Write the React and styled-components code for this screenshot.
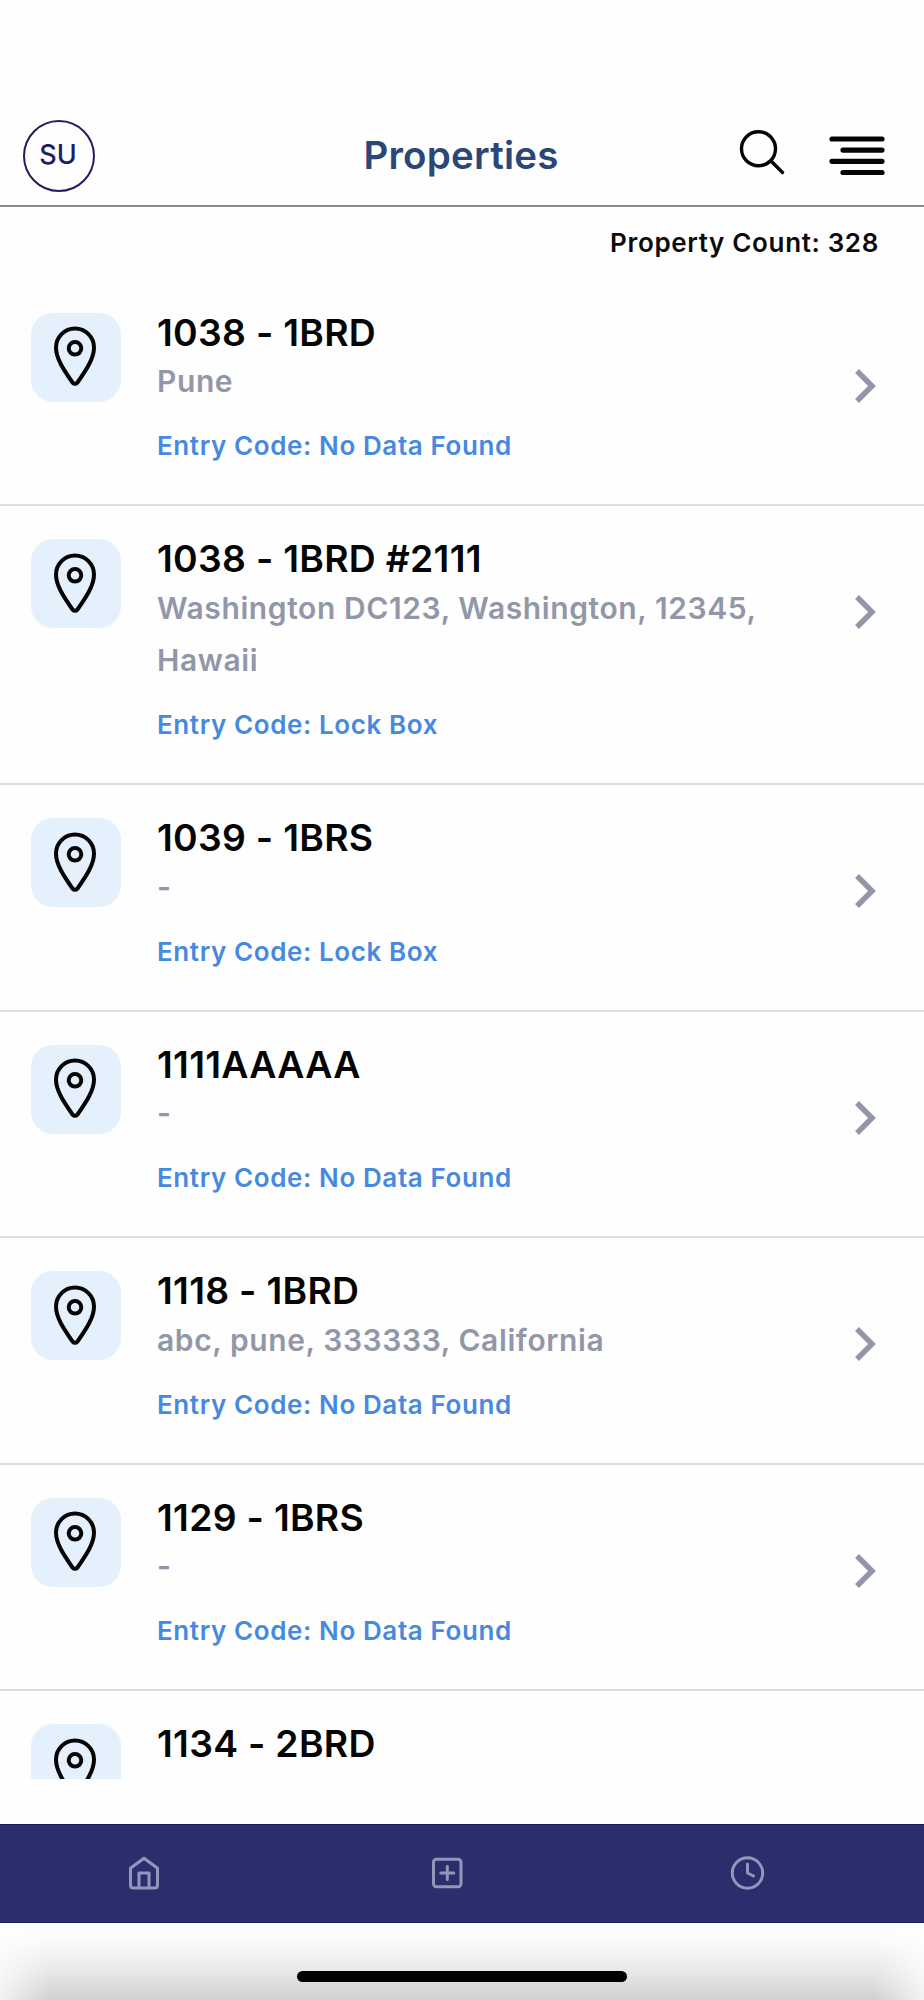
import React from "react";
import styled, { createGlobalStyle } from "styled-components";

const Global = createGlobalStyle`
  * { box-sizing: border-box; }
  body { margin: 0; background: #fff; font-family: Inter, "Liberation Sans", sans-serif; }
`;

const Screen = styled.div`
  width: 924px;
  height: 2000px;
  display: flex;
  flex-direction: column;
  background: #fefefe;
  overflow: hidden;
`;

const Header = styled.header`
  height: 207px;
  flex: none;
  padding: 106px 22.5px 0;
  border-bottom: 2px solid #8b8c8e;
  display: grid;
  grid-template-columns: 1fr auto 1fr;
  align-items: center;
`;

const Avatar = styled.div`
  width: 72px;
  height: 72px;
  border: 2px solid #211d63;
  border-radius: 50%;
  display: flex;
  align-items: center;
  justify-content: center;
  padding: 0 1px 3px 0;
  font-size: 27px;
  font-weight: 500;
  color: #211d63;
`;

const Title = styled.h1`
  margin: 0 2px 1px 0;
  font-size: 38.5px;
  line-height: 44px;
  font-weight: 600;
  color: #2b4778;
  letter-spacing: 0.2px;
`;

const Actions = styled.div`
  display: flex;
  justify-content: flex-end;
  align-items: center;
  gap: 44px;
  padding-right: 16.5px;

  svg:first-child { margin-bottom: 8px; }
`;

const Count = styled.p`
  margin: 0;
  height: 72.7px;
  flex: none;
  padding: 20px 45px 0 0;
  text-align: right;
  font-size: 26px;
  line-height: 32px;
  font-weight: 600;
  letter-spacing: 0.65px;
  color: #0b0b0b;
`;

const List = styled.ul`
  margin: 0;
  padding: 0;
  list-style: none;
  height: 1499.3px;
  flex: none;
  overflow: hidden;
`;

const Row = styled.li`
  display: flex;
  align-items: flex-start;
  padding: 33px 47px 37px 31px;
  border-bottom: 2px solid #dcdcdc;
`;

const Tile = styled.div`
  width: 90px;
  height: 89px;
  flex: none;
  border-radius: 22px;
  background: #e5f0fd;
  display: flex;
  align-items: center;
  justify-content: center;
  padding-right: 2px;
`;

const Details = styled.div`
  flex: 1;
  padding-left: 36px;
`;

const Name = styled.h2`
  margin: 0;
  font-size: 37.3px;
  line-height: 40px;
  font-weight: 600;
  letter-spacing: 0.3px;
  color: #050505;
`;

const Address = styled.p`
  margin: 2.5px 0 0;
  width: 640px;
  font-size: 30px;
  line-height: 52.5px;
  font-weight: 600;
  letter-spacing: 0.6px;
  color: #9297a8;
`;

const Code = styled.p`
  margin: 18.5px 0 2px;
  font-size: 26px;
  line-height: 39px;
  font-weight: 600;
  letter-spacing: 0.6px;
  color: #4789df;
`;

const Arrow = styled.svg`
  flex: none;
  margin-top: 55px;
`;

const TabBar = styled.nav`
  margin-top: 45.5px;
  height: 99px;
  flex: none;
  background: #2a2e6d;
  border-top: 1px solid #1d1a5c;
  border-bottom: 1px solid #1d1a5c;
  padding: 0 158px 2px 126px;
  display: flex;
  align-items: center;
  justify-content: space-between;
`;

const Footer = styled.footer`
  flex: 1;
  background:
    linear-gradient(to right, rgba(254, 254, 254, 0.75) 0, rgba(254, 254, 254, 0) 50px, rgba(254, 254, 254, 0) 874px, rgba(254, 254, 254, 0.75) 100%),
    linear-gradient(to bottom, #fefefe 0, #fbfbfb 22%, #e6e6e6 66%, #d0d0d0 100%);
  display: flex;
  justify-content: center;
  padding-top: 47.5px;
`;

const HomeIndicator = styled.div`
  width: 330px;
  height: 11px;
  border-radius: 6px;
  background: #000;
`;

const PinIcon = () => (
  <svg width="44" height="62" viewBox="0 0 44 62" fill="none" stroke="#050505" strokeWidth="4">
    <path d="M22 2.500C11.500 2.500 3 11 3 21.500c0 11 7.500 22 16.500 35q2.500 2.500 5 0C33.500 43.500 41 32.500 41 21.500 41 11 32.500 2.500 22 2.500Z" />
    <circle cx="22" cy="22.300" r="6.300" />
  </svg>
);

const SearchIcon = () => (
  <svg width="46" height="46" viewBox="0 0 46 46" fill="none" stroke="#050505" strokeWidth="3.400" strokeLinecap="round">
    <circle cx="19.500" cy="19.700" r="17" />
    <path d="M32 32 43.500 43.500" />
  </svg>
);

const MenuIcon = () => (
  <svg width="56" height="40" viewBox="0 0 56 40" stroke="#050505" strokeWidth="5.200" strokeLinecap="round">
    <path d="M3 3H53M14 14.100H53M3 25.300H53M14 36.500H53" />
  </svg>
);

const tabStroke = { fill: "none", stroke: "#9297ba", strokeWidth: 3, strokeLinecap: "round", strokeLinejoin: "round" };

const HomeIcon = () => (
  <svg width="36" height="36" viewBox="0 0 36 36" {...tabStroke}>
    <path d="M4.500 13.200 18 3.200 31.500 13.200V30q0 3-3 3H7.500q-3 0-3-3ZM13 33V18H23V33" />
  </svg>
);

const AddIcon = () => (
  <svg width="36" height="36" viewBox="0 0 36 36" {...tabStroke}>
    <rect x="5.500" y="4.200" width="27.500" height="27.500" rx="3" />
    <path d="M19.300 11.500V24.500M12.800 18H25.800" />
  </svg>
);

const ClockIcon = () => (
  <svg width="36" height="36" viewBox="0 0 36 36" {...tabStroke}>
    <circle cx="17.500" cy="18" r="15.200" />
    <path d="M17.500 9V18L23.500 21" />
  </svg>
);

const properties = [
  { name: "1038 - 1BRD", address: "Pune", code: "No Data Found" },
  { name: "1038 - 1BRD #2111", address: "Washington DC123, Washington, 12345, Hawaii", code: "Lock Box" },
  { name: "1039 - 1BRS", address: "-", code: "Lock Box" },
  { name: "1111AAAAA", address: "-", code: "No Data Found" },
  { name: "1118 - 1BRD", address: "abc, pune, 333333, California", code: "No Data Found" },
  { name: "1129 - 1BRS", address: "-", code: "No Data Found" },
  { name: "1134 - 2BRD" },
];

export default function App() {
  return (
    <Screen>
      <Global />
      <Header>
        <Avatar>SU</Avatar>
        <Title>Properties</Title>
        <Actions>
          <SearchIcon />
          <MenuIcon />
        </Actions>
      </Header>
      <Count>Property Count: 328</Count>
      <List>
        {properties.map((p) => (
          <Row key={p.name}>
            <Tile>
              <PinIcon />
            </Tile>
            <Details>
              <Name>{p.name}</Name>
              {p.address && <Address>{p.address}</Address>}
              {p.code && <Code>Entry Code: {p.code}</Code>}
            </Details>
            {p.code && (
              <Arrow width="23" height="36" viewBox="0 0 23 36" fill="none" stroke="#9297a8" strokeWidth="5.500">
                <path d="M3 3 18 18 3 33" />
              </Arrow>
            )}
          </Row>
        ))}
      </List>
      <TabBar>
        <HomeIcon />
        <AddIcon />
        <ClockIcon />
      </TabBar>
      <Footer>
        <HomeIndicator />
      </Footer>
    </Screen>
  );
}
